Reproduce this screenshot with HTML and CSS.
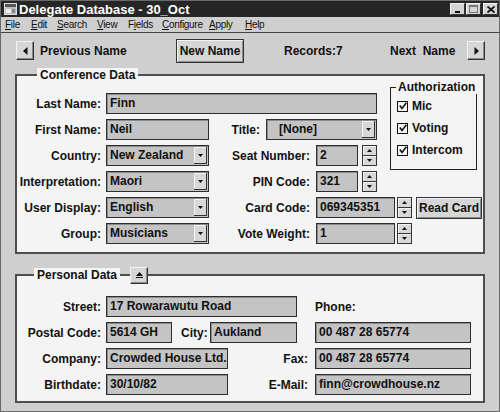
FILE: index.html
```html
<!DOCTYPE html>
<html>
<head>
<meta charset="utf-8">
<link rel="stylesheet" href="styles.css">
</head>
<body>
<div class="window">
  <div class="titlebar">
    <svg class="appicon" viewBox="0 0 13 12"><rect x="0.5" y="0.5" width="12" height="11" fill="#bdbdbd" stroke="#e0e0e0"/><rect x="1" y="1" width="11" height="3" fill="#555"/><rect x="2" y="6" width="5" height="4" fill="#f0f0f0"/><rect x="8" y="6" width="3" height="4" fill="#888"/></svg>
    <span class="title">Delegate Database - 30_Oct</span>
    <div class="winbtns">
      <span class="wb"><svg width="8" height="8" viewBox="0 0 8 8"><rect x="1" y="6" width="5" height="2" fill="#111"/></svg></span>
      <span class="wb"><svg width="9" height="8" viewBox="0 0 9 8"><rect x="0.5" y="0.5" width="8" height="7" fill="none" stroke="#777"/><rect x="0.5" y="0.5" width="8" height="1.5" fill="#777"/></svg></span>
      <span class="wb wb-close"><svg width="8" height="7" viewBox="0 0 8 7"><path d="M0.5 0.5 L7.5 6.5 M7.5 0.5 L0.5 6.5" stroke="#111" stroke-width="1.8"/></svg></span>
    </div>
  </div>
  <div class="menubar">
    <span class="mi m-file"><u>F</u>ile</span>
    <span class="mi m-edit"><u>E</u>dit</span>
    <span class="mi m-search"><u>S</u>earch</span>
    <span class="mi m-view"><u>V</u>iew</span>
    <span class="mi m-fields">F<u>i</u>elds</span>
    <span class="mi m-config"><u>C</u>onfigure</span>
    <span class="mi m-apply"><u>A</u>pply</span>
    <span class="mi m-help"><u>H</u>elp</span>
  </div>
  <div class="toolbar">
    <button class="arrowbtn"><svg width="5" height="8" viewBox="0 0 5 8"><path d="M4.5 0 V8 L0 4 Z" fill="#111"/></svg></button>
    <span class="tb-prev">Previous Name</span>
    <button class="btn newname">New Name</button>
    <span class="tb-records">Records:7</span>
    <span class="tb-next">Next&nbsp; Name</span>
    <button class="arrowbtn"><svg width="5" height="8" viewBox="0 0 5 8"><path d="M0.5 0 V8 L5 4 Z" fill="#111"/></svg></button>
  </div>

  <fieldset class="group conf">
    <legend class="glegend">Conference Data</legend>
    <div class="conf-grid">
      <div class="row r1">
        <span class="lbl">Last Name:</span>
        <div class="field w-last">Finn</div>
      </div>
      <fieldset class="auth">
        <legend class="alegend">Authorization</legend>
        <div class="chk"><span class="box"><svg width="8" height="8" viewBox="0 0 8 8"><path d="M0.8 3.6 L3 6.4 L7.4 0.8" fill="none" stroke="#111" stroke-width="1.6"/></svg></span>Mic</div>
        <div class="chk"><span class="box"><svg width="8" height="8" viewBox="0 0 8 8"><path d="M0.8 3.6 L3 6.4 L7.4 0.8" fill="none" stroke="#111" stroke-width="1.6"/></svg></span>Voting</div>
        <div class="chk"><span class="box"><svg width="8" height="8" viewBox="0 0 8 8"><path d="M0.8 3.6 L3 6.4 L7.4 0.8" fill="none" stroke="#111" stroke-width="1.6"/></svg></span>Intercom</div>
      </fieldset>
      <div class="row r2">
        <span class="lbl">First Name:</span>
        <div class="field w-first">Neil</div>
        <span class="rlbl-title">Title:</span>
        <div class="field select w-title"><span class="sel-text title-text">[None]</span><span class="ddbtn"><svg width="5" height="3" viewBox="0 0 5 3"><path d="M0 0H5L2.5 3Z" fill="#111"/></svg></span></div>
      </div>
      <div class="row r3">
        <span class="lbl">Country:</span>
        <div class="field select w-first"><span class="sel-text">New Zealand</span><span class="ddbtn"><svg width="5" height="3" viewBox="0 0 5 3"><path d="M0 0H5L2.5 3Z" fill="#111"/></svg></span></div>
        <span class="rlbl">Seat Number:</span>
        <div class="field w-num">2</div>
        <div class="spin sp-gap"><span><svg width="5" height="3" viewBox="0 0 5 3"><path d="M0 3H5L2.5 0Z" fill="#111"/></svg></span><span><svg width="5" height="3" viewBox="0 0 5 3"><path d="M0 0H5L2.5 3Z" fill="#111"/></svg></span></div>
      </div>
      <div class="row r4">
        <span class="lbl">Interpretation:</span>
        <div class="field select w-first"><span class="sel-text">Maori</span><span class="ddbtn"><svg width="5" height="3" viewBox="0 0 5 3"><path d="M0 0H5L2.5 3Z" fill="#111"/></svg></span></div>
        <span class="rlbl">PIN Code:</span>
        <div class="field w-num">321</div>
        <div class="spin sp-gap"><span><svg width="5" height="3" viewBox="0 0 5 3"><path d="M0 3H5L2.5 0Z" fill="#111"/></svg></span><span><svg width="5" height="3" viewBox="0 0 5 3"><path d="M0 0H5L2.5 3Z" fill="#111"/></svg></span></div>
      </div>
      <div class="row r5">
        <span class="lbl">User Display:</span>
        <div class="field select w-first"><span class="sel-text">English</span><span class="ddbtn"><svg width="5" height="3" viewBox="0 0 5 3"><path d="M0 0H5L2.5 3Z" fill="#111"/></svg></span></div>
        <span class="rlbl">Card Code:</span>
        <div class="field w-card">069345351</div>
        <div class="spin sp-tight"><span><svg width="5" height="3" viewBox="0 0 5 3"><path d="M0 3H5L2.5 0Z" fill="#111"/></svg></span><span><svg width="5" height="3" viewBox="0 0 5 3"><path d="M0 0H5L2.5 3Z" fill="#111"/></svg></span></div>
        <button class="btn readcard">Read Card</button>
      </div>
      <div class="row r6">
        <span class="lbl">Group:</span>
        <div class="field select w-first"><span class="sel-text">Musicians</span><span class="ddbtn"><svg width="5" height="3" viewBox="0 0 5 3"><path d="M0 0H5L2.5 3Z" fill="#111"/></svg></span></div>
        <span class="rlbl">Vote Weight:</span>
        <div class="field w-card">1</div>
        <div class="spin sp-tight"><span><svg width="5" height="3" viewBox="0 0 5 3"><path d="M0 3H5L2.5 0Z" fill="#111"/></svg></span><span><svg width="5" height="3" viewBox="0 0 5 3"><path d="M0 0H5L2.5 3Z" fill="#111"/></svg></span></div>
      </div>
    </div>
  </fieldset>

  <fieldset class="group pers">
    <legend class="plegend"><span class="ltext">Personal Data</span><span class="ldash"></span><button class="upbtn"><svg width="7" height="6" viewBox="0 0 7 6"><path d="M0 4H7L3.5 0Z" fill="#111"/><rect x="0" y="5" width="7" height="1" fill="#111"/></svg></button></legend>
    <div class="pers-rows">
      <div class="row">
        <span class="lbl">Street:</span>
        <div class="field w-street">17 Rowarawutu Road</div>
        <span class="phone-lbl">Phone:</span>
      </div>
      <div class="row">
        <span class="lbl">Postal Code:</span>
        <div class="field w-postal">5614 GH</div>
        <span class="city-lbl">City:</span>
        <div class="field w-city">Aukland</div>
        <div class="field w-phone">00 487 28 65774</div>
      </div>
      <div class="row">
        <span class="lbl">Company:</span>
        <div class="field w-co">Crowded House Ltd.</div>
        <span class="prlbl">Fax:</span>
        <div class="field w-phone2">00 487 28 65774</div>
      </div>
      <div class="row">
        <span class="lbl">Birthdate:</span>
        <div class="field w-co">30/10/82</div>
        <span class="prlbl">E-Mail:</span>
        <div class="field w-phone2">finn@crowdhouse.nz</div>
      </div>
    </div>
  </fieldset>
</div>
</body>
</html>
```

FILE: styles.css
```css
* { box-sizing: border-box; }
html, body { margin: 0; padding: 0; }
body {
  width: 500px;
  height: 412px;
  overflow: hidden;
  background: #cfcfcf;
  font-family: "Liberation Sans", Arial, sans-serif;
  color: #111;
}
.window {
  width: 500px;
  height: 412px;
  background: #cfcfcf;
  border: 1px solid #6a6a6a;
  overflow: hidden;
}

/* title bar */
.titlebar {
  height: 16px;
  background: #262626;
  display: flex;
  align-items: center;
  padding: 0 1px 0 3px;
  color: #fff;
}
.appicon { width: 13px; height: 12px; flex: none; margin-right: 2px; }
.title {
  flex: 1;
  font-weight: bold;
  font-size: 13px;
  white-space: nowrap;
}
.winbtns { display: flex; gap: 1px; }
.wb {
  width: 15px;
  height: 12px;
  background: #d4d4d4;
  border: 1px solid;
  border-color: #f4f4f4 #333 #333 #f4f4f4;
  display: flex;
  align-items: center;
  justify-content: center;
}
.wb-close { margin-left: 1px; }

/* menu */
.menubar {
  height: 16px;
  border-bottom: 1px solid #444;
  display: flex;
  align-items: center;
  padding-left: 4px;
  font-size: 10px;
  letter-spacing: -0.3px;
  color: #111;
}
.mi { flex: none; white-space: nowrap; }
.m-file { width: 26px; }
.m-edit { width: 26px; }
.m-search { width: 40px; }
.m-view { width: 31px; }
.m-fields { width: 34px; }
.m-config { width: 47px; }
.m-apply { width: 36px; }
.m-help { width: 30px; }

/* toolbar */
.toolbar {
  height: 35px;
  display: flex;
  align-items: center;
  padding-left: 15px;
  font-weight: bold;
  font-size: 12px;
}
button {
  font-family: inherit;
  margin: 0;
  padding: 0;
}
.arrowbtn {
  width: 18px;
  height: 19px;
  flex: none;
  background: #d6d6d6;
  border: 1px solid;
  border-color: #f2f2f2 #333 #333 #f2f2f2;
  box-shadow: inset -1px -1px 0 #8a8a8a;
  display: flex;
  align-items: center;
  justify-content: center;
}
.tb-prev { width: 136px; margin-left: 6px; flex: none; white-space: nowrap; }
.btn {
  flex: none;
  background: #d6d6d6;
  border: 1px solid #333;
  box-shadow: inset 1px 1px 0 #f4f4f4, inset -1px -1px 0 #8a8a8a;
  font-weight: bold;
  font-size: 12px;
  color: #111;
}
.newname { width: 68px; height: 24px; }
.tb-records { margin-left: 40px; width: 106px; flex: none; white-space: nowrap; }
.tb-next { width: 77px; flex: none; white-space: nowrap; }

/* groups */
.group {
  margin: 0 0 0 14px;
  width: 470px;
  min-width: 0;
  border: 2px solid #4e4e4e;
  background: #f4f4f4;
  padding: 11px 0 8px 0;
}
.glegend {
  margin-left: 20px;
  padding: 0 3px;
  font-weight: bold;
  font-size: 12px;
  line-height: 14px;
  background: #f4f4f4;
}
.pers { margin-top: 12px; padding: 12px 0 6px 0; }
.plegend {
  margin-left: 17px;
  padding: 0;
  height: 18px;
  display: flex;
  align-items: center;
  font-weight: bold;
  font-size: 12px;
}
.ltext { background: #f4f4f4; padding: 0 3px; line-height: 14px; }
.ldash { width: 10px; height: 2px; background: #4e4e4e; }
.upbtn {
  width: 18px;
  height: 17px;
  background: #d6d6d6;
  border: 1px solid;
  border-color: #f2f2f2 #333 #333 #f2f2f2;
  box-shadow: inset -1px -1px 0 #8a8a8a;
  display: flex;
  align-items: center;
  justify-content: center;
}

/* conference grid */
.conf-grid {
  display: grid;
  grid-template-columns: 365px 1fr;
  grid-template-rows: repeat(6, 21px);
  row-gap: 5px;
}
.row {
  display: flex;
  align-items: center;
  height: 21px;
  font-weight: bold;
  font-size: 12px;
}
.r1 { grid-column: 1; grid-row: 1; }
.r2 { grid-column: 1; grid-row: 2; }
.r3 { grid-column: 1; grid-row: 3; }
.r4 { grid-column: 1; grid-row: 4; }
.r5 { grid-column: 1 / -1; grid-row: 5; }
.r6 { grid-column: 1; grid-row: 6; }

.lbl {
  width: 84px;
  margin-right: 5px;
  text-align: right;
  flex: none;
  white-space: nowrap;
}
.rlbl-title { width: 51px; margin-right: 6px; text-align: right; flex: none; }
.rlbl { width: 101px; margin-right: 6px; text-align: right; flex: none; white-space: nowrap; }

.field {
  flex: none;
  height: 21px;
  border: 1px solid #2e2e2e;
  box-shadow: inset 1px 1px 0 #8c8c8c;
  background: #c4c4c4;
  padding-left: 3px;
  line-height: 19px;
  font-weight: bold;
  font-size: 12px;
  white-space: nowrap;
  overflow: hidden;
}
.w-last { width: 271px; }
.w-first { width: 103px; }
.w-title { width: 111px; }
.w-num { width: 42px; }
.w-card { width: 79px; }

.select { display: flex; align-items: center; padding-right: 1px; }
.sel-text { flex: 1; }
.title-text { padding-left: 9px; }
.ddbtn {
  width: 13px;
  height: 17px;
  flex: none;
  background: #d8d8d8;
  border-right: 1px solid #333;
  border-bottom: 1px solid #333;
  box-shadow: inset 1px 1px 0 #f4f4f4;
  display: flex;
  align-items: center;
  justify-content: center;
}

.spin {
  width: 15px;
  height: 21px;
  flex: none;
  display: flex;
  flex-direction: column;
  border: 1px solid #333;
}
.spin span {
  flex: 1;
  background: #d8d8d8;
  box-shadow: inset 1px 1px 0 #f4f4f4;
  display: flex;
  align-items: center;
  justify-content: center;
}
.spin span:first-child { border-bottom: 1px solid #333; }
.sp-gap { margin-left: 4px; }
.sp-tight { margin-left: 2px; }
.readcard { width: 66px; height: 22px; margin-left: 4px; }

/* authorization */
.auth {
  grid-column: 2;
  grid-row: 1 / 4;
  margin: -13px 0 -4px 8px;
  width: 87px;
  min-width: 0;
  border: 1px solid #222;
  padding: 1px 0 0 0;
}
.alegend {
  margin-left: 5px;
  padding: 0 2px;
  font-weight: bold;
  font-size: 12px;
  line-height: 14px;
}
.chk {
  height: 22px;
  display: flex;
  align-items: center;
  margin-left: 6px;
  font-weight: bold;
  font-size: 12px;
  white-space: nowrap;
}
.box {
  width: 11px;
  height: 11px;
  border: 1px solid #111;
  background: #f4f4f4;
  margin-right: 4px;
  display: flex;
  align-items: center;
  justify-content: center;
}

/* personal rows */
.pers-rows { display: flex; flex-direction: column; gap: 5px; }
.w-street { width: 191px; }
.phone-lbl { margin-left: 18px; }
.w-postal { width: 66px; }
.city-lbl { width: 29px; margin-left: 9px; flex: none; }
.w-city { width: 87px; }
.w-phone { width: 156px; margin-left: 18px; }
.w-co { width: 122px; }
.prlbl { width: 80px; margin-right: 7px; text-align: right; flex: none; white-space: nowrap; }
.w-phone2 { width: 156px; }
```
